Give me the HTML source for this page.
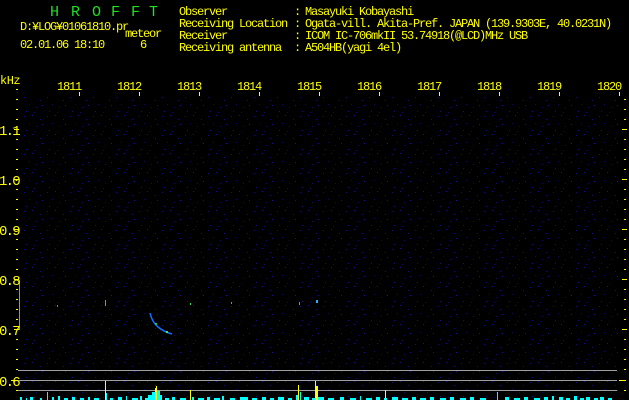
<!DOCTYPE html>
<html><head><meta charset="utf-8"><style>
html,body{margin:0;padding:0;background:#000;width:629px;height:400px;overflow:hidden}
svg{display:block}
text{font-family:"Liberation Mono","DejaVu Sans Mono",monospace;font-size:12px;letter-spacing:-1.2px;fill:#ffff00}
</style></head><body>
<svg width="629" height="400" viewBox="0 0 629 400" xmlns="http://www.w3.org/2000/svg">
<defs>
<pattern id="n" width="23" height="19" patternUnits="userSpaceOnUse">
<rect x="1" y="2" width="1" height="1" fill="#10107a"/>
<rect x="9" y="1" width="1" height="1" fill="#141490"/>
<rect x="13" y="12" width="1" height="1" fill="#0c0c6a"/>
<rect x="17" y="5" width="1" height="1" fill="#101080"/>
<rect x="3" y="16" width="1" height="1" fill="#121288"/>
<rect x="11" y="17" width="1" height="1" fill="#0c0c66"/>
<rect x="19" y="10" width="1" height="1" fill="#15159a"/>
<rect x="6" y="9" width="1" height="1" fill="#0a0a60"/>
</pattern>
</defs>
<rect x="20" y="97" width="600" height="303" fill="url(#n)"/>

<g>
<text x="50" y="16" style="fill:#20e020;font-size:15px;letter-spacing:0">H</text>
<text x="71" y="16" style="fill:#20e020;font-size:15px;letter-spacing:0">R</text>
<text x="92" y="16" style="fill:#20e020;font-size:15px;letter-spacing:0">O</text>
<text x="111" y="16" style="fill:#20e020;font-size:15px;letter-spacing:0">F</text>
<text x="131" y="16" style="fill:#20e020;font-size:15px;letter-spacing:0">F</text>
<text x="149" y="16" style="fill:#20e020;font-size:15px;letter-spacing:0">T</text>
</g>
<text x="20" y="30">D:¥LOG¥01061810.pr</text>
<text x="125" y="37">meteor</text>
<text x="20" y="48">02.01.06 18:10</text>
<text x="140" y="48">6</text>

<text x="179" y="15">Observer</text>
<text x="179" y="27">Receiving Location</text>
<text x="179" y="39">Receiver</text>
<text x="179" y="51">Receiving antenna</text>
<text x="294" y="15">:</text><text x="294" y="27">:</text><text x="294" y="39">:</text><text x="294" y="51">:</text>
<text x="305" y="15">Masayuki Kobayashi</text>
<text x="305" y="27">Ogata-vill. Akita-Pref. JAPAN (139.9303E, 40.0231N)</text>
<text x="305" y="39">ICOM IC-706mkII 53.74918(@LCD)MHz USB</text>
<text x="305" y="51">A504HB(yagi 4el)</text>

<text x="0" y="84" style="letter-spacing:-0.5px">kHz</text>
<g>
<text x="57" y="90">1811</text><text x="117" y="90">1812</text><text x="177" y="90">1813</text>
<text x="237" y="90">1814</text><text x="297" y="90">1815</text><text x="357" y="90">1816</text>
<text x="417" y="90">1817</text><text x="477" y="90">1818</text><text x="537" y="90">1819</text>
<text x="597" y="90">1820</text>
</g>
<g fill="#ffff00">
<rect x="79" y="92" width="1" height="4"/><rect x="139" y="92" width="1" height="4"/><rect x="199" y="92" width="1" height="4"/>
<rect x="259" y="92" width="1" height="4"/><rect x="319" y="92" width="1" height="4"/><rect x="379" y="92" width="1" height="4"/>
<rect x="439" y="92" width="1" height="4"/><rect x="499" y="92" width="1" height="4"/><rect x="559" y="92" width="1" height="4"/>
<rect x="619" y="92" width="1" height="4"/>
<rect x="16" y="89" width="2" height="1"/>
</g>

<g fill="#ffff00" id="ticks">
<rect x="16" y="99" width="2" height="1"/><rect x="16" y="109" width="2" height="1"/><rect x="16" y="119" width="2" height="1"/><rect x="14" y="129" width="5" height="1"/><rect x="16" y="139" width="2" height="1"/>
<rect x="16" y="149" width="2" height="1"/><rect x="16" y="159" width="2" height="1"/><rect x="16" y="169" width="2" height="1"/><rect x="14" y="179" width="5" height="1"/><rect x="16" y="189" width="2" height="1"/>
<rect x="16" y="199" width="2" height="1"/><rect x="16" y="209" width="2" height="1"/><rect x="16" y="219" width="2" height="1"/><rect x="14" y="229" width="5" height="1"/><rect x="16" y="239" width="2" height="1"/>
<rect x="16" y="249" width="2" height="1"/><rect x="16" y="259" width="2" height="1"/><rect x="16" y="269" width="2" height="1"/><rect x="14" y="279" width="5" height="1"/><rect x="16" y="289" width="2" height="1"/>
<rect x="16" y="299" width="2" height="1"/><rect x="16" y="309" width="2" height="1"/><rect x="16" y="319" width="2" height="1"/><rect x="14" y="329" width="5" height="1"/><rect x="16" y="339" width="2" height="1"/>
<rect x="16" y="349" width="2" height="1"/><rect x="16" y="359" width="2" height="1"/><rect x="16" y="369" width="2" height="1"/><rect x="11" y="380" width="7" height="1"/><rect x="16" y="390" width="2" height="1"/>
</g>
<use href="#ticks" x="608"/>
<rect x="19" y="280" width="1" height="50" fill="#909090"/>
<g>
<text x="-1" y="135" style="font-size:14px;letter-spacing:-1.8px">1.1</text><text x="-1" y="185" style="font-size:14px;letter-spacing:-1.8px">1.0</text><text x="-1" y="235" style="font-size:14px;letter-spacing:-1.8px">0.9</text>
<text x="-1" y="285" style="font-size:14px;letter-spacing:-1.8px">0.8</text><text x="-1" y="335" style="font-size:14px;letter-spacing:-1.8px">0.7</text><text x="-1" y="386" style="font-size:14px;letter-spacing:-1.8px">0.6</text>
</g>

<g fill="#a0a0a0">
<rect x="18" y="370" width="599" height="1"/><rect x="18" y="380" width="599" height="1"/><rect x="18" y="390" width="599" height="1"/>
</g>

<path d="M150 313 Q152 322 158 327 Q164 332 172 334" stroke="#1070ff" stroke-width="1.5" fill="none"/>
<rect x="155" y="323" width="2" height="2" fill="#20c040"/>
<rect x="166" y="331" width="2" height="2" fill="#40e080"/>
<rect x="105" y="300" width="1" height="6" fill="#20b0ff"/>
<rect x="57" y="305" width="1" height="2" fill="#20a0ff"/>
<rect x="190" y="303" width="1" height="2" fill="#30e040"/>
<rect x="231" y="302" width="1" height="2" fill="#30c070"/>
<rect x="316" y="300" width="2" height="3" fill="#20b0ff"/>
<rect x="299" y="302" width="1" height="3" fill="#30c070"/>

<g fill="#00ffff">
<rect x="20" y="397" width="2" height="3"/><rect x="26" y="398" width="1" height="2"/><rect x="30" y="397" width="3" height="3"/><rect x="40" y="398" width="2" height="2"/>
<rect x="47" y="392" width="1" height="8"/><rect x="52" y="397" width="2" height="3"/><rect x="58" y="396" width="2" height="4"/><rect x="64" y="398" width="4" height="2"/>
<rect x="72" y="397" width="3" height="3"/><rect x="80" y="398" width="4" height="2"/><rect x="88" y="397" width="2" height="3"/><rect x="94" y="398" width="5" height="2"/>
<rect x="105" y="393" width="2" height="7"/><rect x="110" y="398" width="3" height="2"/><rect x="118" y="397" width="4" height="3"/><rect x="126" y="396" width="1" height="4"/>
<rect x="132" y="398" width="6" height="2"/><rect x="140" y="396" width="2" height="4"/><rect x="145" y="398" width="5" height="2"/>
<rect x="148" y="395" width="14" height="5"/><rect x="152" y="392" width="8" height="8"/><rect x="155" y="391" width="5" height="9"/>
<rect x="165" y="398" width="4" height="2"/><rect x="172" y="397" width="3" height="3"/><rect x="180" y="398" width="6" height="2"/><rect x="192" y="397" width="2" height="3"/>
<rect x="198" y="398" width="6" height="2"/><rect x="207" y="397" width="3" height="3"/><rect x="214" y="398" width="6" height="2"/><rect x="222" y="396" width="2" height="4"/>
<rect x="230" y="398" width="5" height="2"/><rect x="240" y="397" width="8" height="3"/><rect x="252" y="398" width="5" height="2"/><rect x="262" y="397" width="4" height="3"/>
<rect x="270" y="398" width="4" height="2"/><rect x="278" y="397" width="6" height="3"/><rect x="288" y="398" width="4" height="2"/><rect x="296" y="395" width="3" height="5"/>
<rect x="300" y="392" width="1" height="8"/><rect x="304" y="397" width="5" height="3"/><rect x="312" y="398" width="3" height="2"/><rect x="318" y="397" width="6" height="3"/>
<rect x="328" y="398" width="6" height="2"/><rect x="340" y="397" width="4" height="3"/><rect x="350" y="398" width="6" height="2"/><rect x="360" y="396" width="1" height="4"/>
<rect x="366" y="398" width="6" height="2"/><rect x="376" y="397" width="4" height="3"/><rect x="384" y="398" width="3" height="2"/><rect x="392" y="397" width="6" height="3"/>
<rect x="402" y="398" width="6" height="2"/><rect x="412" y="397" width="4" height="3"/><rect x="420" y="398" width="6" height="2"/><rect x="430" y="397" width="4" height="3"/>
<rect x="440" y="398" width="6" height="2"/><rect x="450" y="397" width="4" height="3"/><rect x="460" y="398" width="6" height="2"/><rect x="470" y="397" width="4" height="3"/>
<rect x="480" y="398" width="6" height="2"/><rect x="497" y="392" width="1" height="8"/><rect x="505" y="397" width="4" height="3"/><rect x="514" y="398" width="6" height="2"/>
<rect x="524" y="397" width="4" height="3"/><rect x="534" y="398" width="6" height="2"/><rect x="544" y="397" width="4" height="3"/><rect x="552" y="396" width="2" height="4"/>
<rect x="559" y="397" width="4" height="3"/><rect x="566" y="398" width="4" height="2"/><rect x="574" y="396" width="3" height="4"/><rect x="580" y="398" width="4" height="2"/>
<rect x="586" y="397" width="4" height="3"/><rect x="594" y="398" width="4" height="2"/><rect x="600" y="397" width="4" height="3"/><rect x="608" y="398" width="4" height="2"/>
</g>
<g fill="#ffff00">
<rect x="105" y="381" width="1" height="19"/><rect x="155" y="388" width="2" height="12"/><rect x="156" y="386" width="1" height="3"/>
<rect x="190" y="390" width="1" height="10"/><rect x="298" y="385" width="1" height="15"/><rect x="315" y="381" width="1" height="19"/><rect x="316" y="386" width="2" height="14"/>
<rect x="385" y="390" width="1" height="10"/>
</g>
</svg>
</body></html>
